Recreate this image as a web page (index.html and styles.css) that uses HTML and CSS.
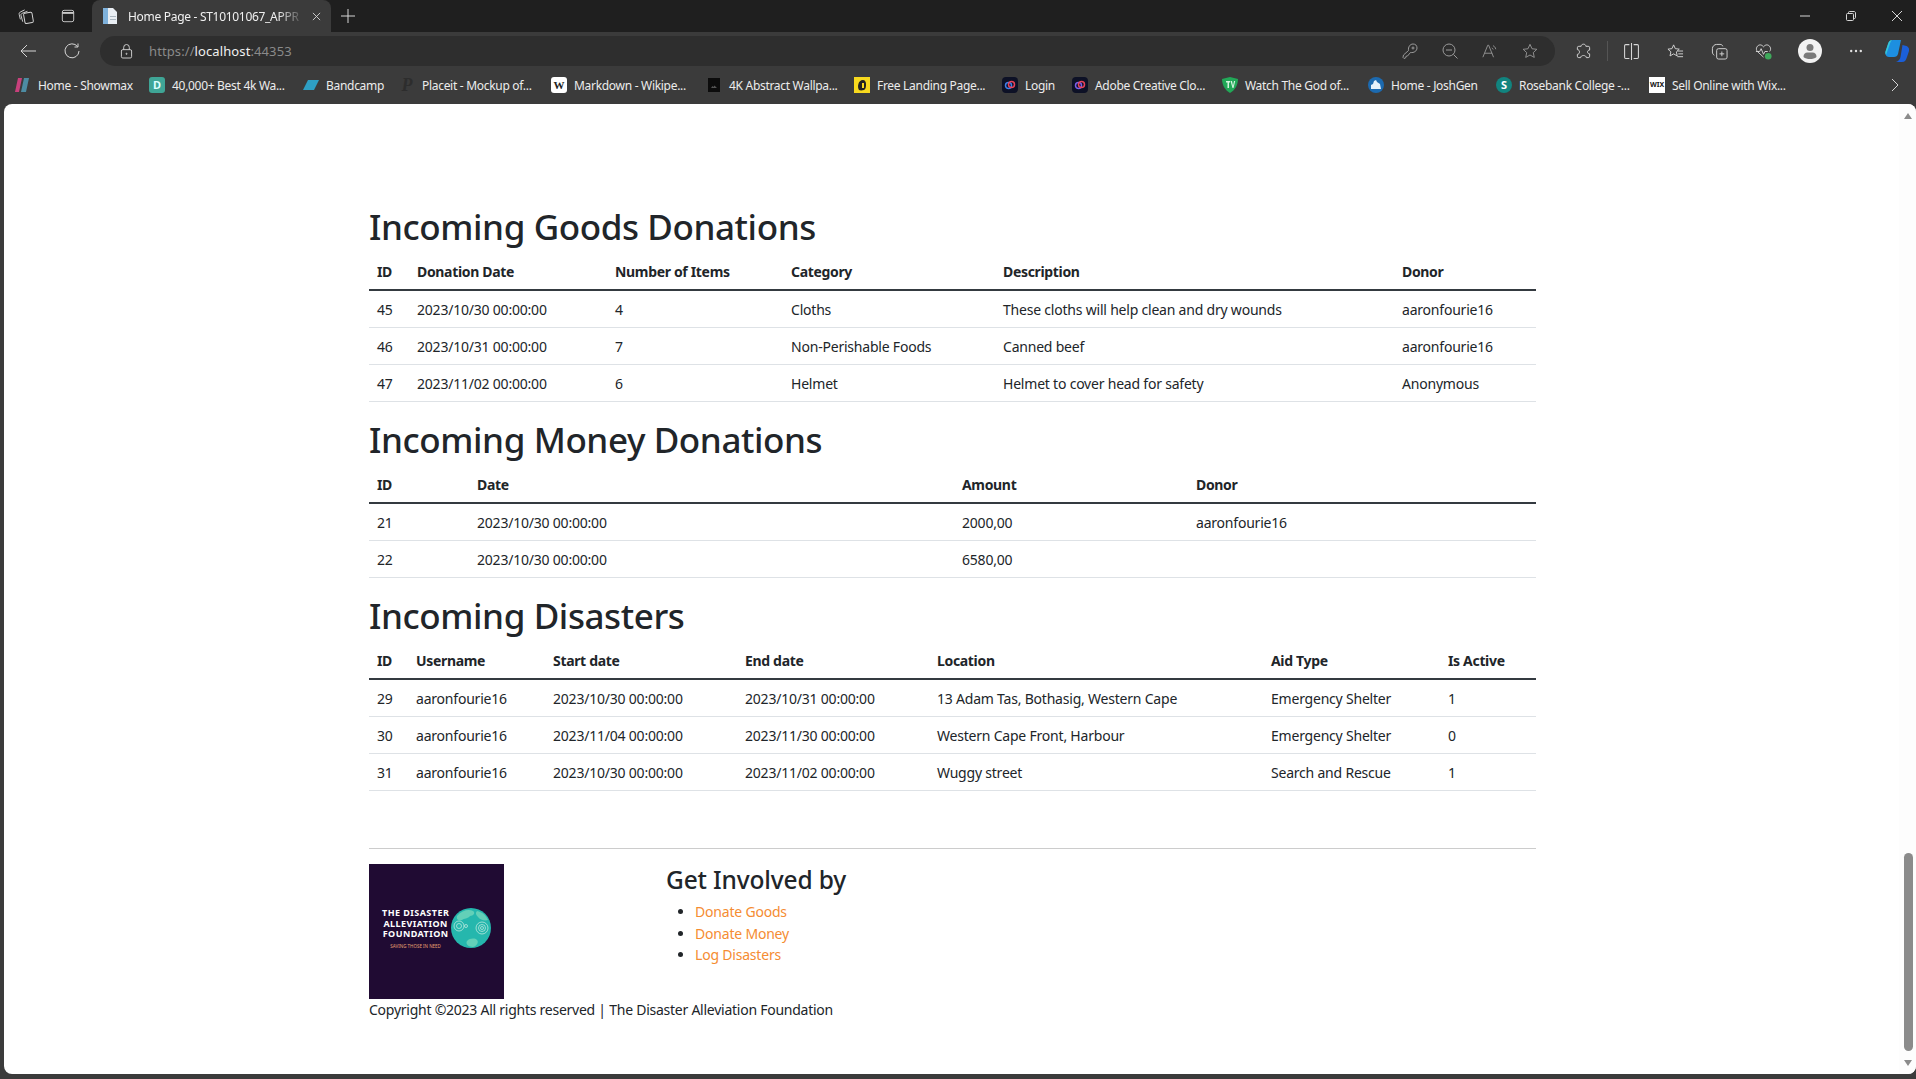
FILE: index.html
```
<!DOCTYPE html>
<html lang="en">
<head>
  <meta charset="UTF-8">
  <title>Home Page - ST10101067_APPR</title>
  <link rel="stylesheet" href="styles.css">
</head>
<body>

<div class="tabstrip">
  <svg class="ico tab-btn-a" viewBox="0 0 18 18"><rect x="6.500" y="5" width="9" height="11" rx="1.500" transform="rotate(-10 11 10)"/><path d="M5 14.500 3.200 8c-.3-1.200.2-2 1.300-2.400L10 3.500M2.500 12 1.300 7c-.4-1.400.2-2.300 1.300-2.800L7 2"/></svg>
  <svg class="ico tab-btn-b" viewBox="0 0 16 16"><rect x="1.500" y="1.500" width="13" height="13" rx="2"/><path d="M1.500 4.500h13" stroke-width="2"/></svg>
  <div class="tab">
    <svg class="tab-fav" viewBox="0 0 16 16"><path fill="#e9eef3" d="M1 0h10l4 4v12H1z"/><path fill="#7fb2dc" d="M1 0h5v16H1z"/><path fill="#aab6c0" d="M8 8h6v1H8zM8 11h6v1H8z"/></svg>
    <span class="tab-title">Home Page - ST10101067_APPR</span>
    <svg class="ico tab-close" viewBox="0 0 10 10"><path d="M1 1l8 8M9 1l-8 8"/></svg>
  </div>
  <svg class="ico tab-new" viewBox="0 0 14 14"><path d="M7 0v14M0 7h14"/></svg>
  <div class="win-btns">
    <svg class="ico" viewBox="0 0 10 10"><path d="M0 5h10"/></svg>
    <svg class="ico" viewBox="0 0 10 10"><rect x=".5" y="2.500" width="7" height="7" rx="1"/><path d="M2.500 2.500V1.500c0-.6.400-1 1-1h4.500c.9 0 1.500.6 1.500 1.500v4.500c0 .6-.4 1-1 1h-1"/></svg>
    <svg class="ico" viewBox="0 0 10 10"><path d="M0 0l10 10M10 0 0 10"/></svg>
  </div>
</div>

<div class="toolbar">
  <svg class="ico tb-back" viewBox="0 0 16 14"><path d="M16 7H1M7 1 1 7l6 6"/></svg>
  <svg class="ico tb-reload" viewBox="0 0 16 16"><path d="M13.500 3.500A7 7 0 1 0 15 8M14 .5v3.500h-3.500"/></svg>
  <div class="address">
    <svg class="ico lock" viewBox="0 0 14 16"><rect x="1.500" y="6" width="11" height="9" rx="1.500"/><path d="M4 6V3.500a3 3 0 0 1 6 0V6"/><circle cx="7" cy="10.500" r=".6"/></svg>
    <span class="url"><span class="dim">https://</span>localhost<span class="dim">:44353</span></span>
    <div class="addr-icons">
      <svg class="ico" viewBox="0 0 16 16"><path d="M2 15.500 1 14.500 1.500 12 6.500 7.500C6 4 8 1 11 1c2.500 0 4 1.500 4 4 0 3-3 5-6.500 4.500L5.500 13l-1.500.3-.3 1.500z"/><circle cx="11" cy="5" r="1"/></svg>
      <svg class="ico" viewBox="0 0 16 16"><circle cx="7" cy="7" r="6"/><path d="M4 7h6M11.500 11.500l4 4"/></svg>
      <svg class="ico" viewBox="0 0 18 16"><path d="M1 15 6.500 1.500h1L13 15M3 10.500h8.500M12.500 2c1.500.8 2.500 2 3 4M11 4.500c.8.4 1.300 1 1.600 1.800"/></svg>
      <svg class="ico" viewBox="0 0 18 18"><path d="M9 1.500l2.300 5 5.400.6-4 3.700 1.100 5.400L9 13.500l-4.800 2.700 1.100-5.400-4-3.700 5.400-.6z"/></svg>
    </div>
  </div>
  <div class="tb-right">
    <svg class="ico tb-i" viewBox="0 0 16 18"><path d="M5.500 3.500c0-3 5-3 5 0h2.500c1 0 1.500.5 1.500 1.500v2.500c-3 0-3 4 0 4v2.500c0 1-.5 1.500-1.500 1.500h-2c0-3-6-3-6 0h-2c-1 0-1.500-.5-1.500-1.500v-2c3 0 3-5 0-5V5c0-1 .5-1.500 1.500-1.500z"/></svg>
    <span class="tb-div"></span>
    <svg class="ico tb-i" viewBox="0 0 16 16"><path d="M6 1.500H2.500c-.6 0-1 .4-1 1v11c0 .6.4 1 1 1H6M10 1.500h3.500c.6 0 1 .4 1 1v11c0 .6-.4 1-1 1H10M8 0v16"/></svg>
    <svg class="ico tb-i" viewBox="0 0 18 18"><path d="M7 2l1.800 4 4.200.5-3.100 2.900.9 4.300L7 11.500l-3.800 2.200.9-4.300L1 6.500 5.200 6zM11 8.500h6M12 11.500h5M11 14.500h6"/></svg>
    <svg class="ico tb-i" viewBox="0 0 18 18"><rect x="6" y="6" width="11" height="11" rx="2"/><path d="M11.500 9v5M9 11.500h5M3.500 13C2 12 1.500 11 1.500 9.500V6c0-2.500 2-4.500 4.500-4.500h3.500c1.500 0 2.500.5 3 2"/></svg>
    <svg class="ico tb-i" viewBox="0 0 18 18"><path d="M9 15 2.500 9C0 6 2.500 2 5.500 2 7 2 8 3 9 4c1-1 2-2 3.500-2 3 0 5.500 4 3 7M1 9h4l1.500-3 2.500 6 1.500-3h3"/><circle cx="14" cy="14" r="3.500" fill="#3fa85b" stroke="none"/></svg>
    <div class="avatar"><svg viewBox="0 0 24 24"><circle cx="12" cy="8.500" r="3.500" fill="#7a7a7a"/><path fill="#7a7a7a" d="M5.500 18c0-3 1.500-4.500 4-4.500h5c2.500 0 4 1.500 4 4.500-1.500 1.500-4 2-6.500 2s-5-.5-6.500-2z"/></svg></div>
    <svg class="more" viewBox="0 0 12 4"><circle cx="1.200" cy="2" r="1.200"/><circle cx="6" cy="2" r="1.200"/><circle cx="10.800" cy="2" r="1.200"/></svg>
    <svg class="copilot" viewBox="0 0 24 24"><path fill="#1d8fe0" d="M8 1h8l-3 14c-.5 2-2 3-4 3H4C1 18 0 15 .7 12L3 5c.8-2.500 2.500-4 5-4z"/><path fill="#36c6d6" d="M1 16c-1-1.500-1-3 0-5l2-6c.8-2.500 2-4 4-4-1 1-2 3-2.500 5z"/><path fill="#1b5fd8" d="M11 23h6c3 0 4-2 5-5l2-6c.5-2.500-.5-4-2.500-5l-4-1-2 12c-.5 2.500-2 4-4.500 5z"/></svg>
  </div>
</div>

<nav class="bookmarks">
  <a class="bm"><svg class="fav" viewBox="0 0 16 16"><path fill="#c8407c" d="M3 1h4L4 15H0z"/><path fill="#4d8ca3" d="M9 1h5l-3 14H6z"/></svg><span>Home - Showmax</span></a>
  <a class="bm"><span class="fav fav-d">D</span><span>40,000+ Best 4k Wa...</span></a>
  <a class="bm"><svg class="fav" viewBox="0 0 16 16"><path fill="#2e9fc4" d="M5 3h11l-5 10H0z"/></svg><span>Bandcamp</span></a>
  <a class="bm"><span class="fav fav-p">P</span><span>Placeit - Mockup of...</span></a>
  <a class="bm"><span class="fav fav-w">W</span><span>Markdown - Wikipe...</span></a>
  <a class="bm"><svg class="fav" viewBox="0 0 16 16"><rect x="2" y="1" width="12" height="14" fill="#0c0c0c"/><path fill="#555" d="M5 11l1.500-2 1 1 1-1.500L11 11z"/></svg><span>4K Abstract Wallpa...</span></a>
  <a class="bm"><svg class="fav" viewBox="0 0 16 16"><rect width="16" height="16" fill="#f7d91e"/><path fill="#222" d="M5 13C3 10 4 3 9 3c2 0 3 2 3 4s0 5-2 6c-2 .6-4 .6-5 0z"/><path fill="#f7d91e" d="M8 6h2v5H8z"/></svg><span>Free Landing Page...</span></a>
  <a class="bm"><svg class="fav" viewBox="0 0 16 16"><rect width="16" height="16" rx="4" fill="#0d1126"/><circle cx="6.500" cy="8.500" r="3" fill="none" stroke="#3f7fe8" stroke-width="1.500"/><circle cx="9.500" cy="7.500" r="3" fill="none" stroke="#e8435a" stroke-width="1.500"/></svg><span>Login</span></a>
  <a class="bm"><svg class="fav" viewBox="0 0 16 16"><rect width="16" height="16" rx="4" fill="#0d1126"/><circle cx="6.500" cy="8.500" r="3" fill="none" stroke="#7a5fe8" stroke-width="1.500"/><circle cx="9.500" cy="7.500" r="3" fill="none" stroke="#e8435a" stroke-width="1.500"/></svg><span>Adobe Creative Clo...</span></a>
  <a class="bm"><svg class="fav" viewBox="0 0 16 16"><path fill="#22a858" d="M0 2l8-2 8 2c0 6-3 11-8 14C3 13 0 8 0 2z"/><path fill="#d5f5df" d="M4 4h4v1.500H7V11H5.500V5.500H4zM8.500 4H10l1 5 1-5h1.200L11.500 11h-1z"/></svg><span>Watch The God of...</span></a>
  <a class="bm"><svg class="fav" viewBox="0 0 16 16"><circle cx="8" cy="8" r="8" fill="#1c6ab0"/><path fill="#e5f1fb" d="M3 12V8l2-1 1-3 2-1 1 2 3 2 1 5z"/></svg><span>Home - JoshGen</span></a>
  <a class="bm"><span class="fav fav-s">S</span><span>Rosebank College -...</span></a>
  <a class="bm"><span class="fav fav-wix">WIX</span><span>Sell Online with Wix...</span></a>
  <svg class="ico bm-next" viewBox="0 0 8 14"><path d="M1 1l6 6-6 6"/></svg>
</nav>

<div class="viewport">
  <main class="page">
    <h1>Incoming Goods Donations</h1>
    <table class="goods">
      <colgroup><col><col><col><col><col><col></colgroup>
      <thead>
        <tr><th>ID</th><th>Donation Date</th><th>Number of Items</th><th>Category</th><th>Description</th><th>Donor</th></tr>
      </thead>
      <tbody>
        <tr><td>45</td><td>2023/10/30 00:00:00</td><td>4</td><td>Cloths</td><td>These cloths will help clean and dry wounds</td><td>aaronfourie16</td></tr>
        <tr><td>46</td><td>2023/10/31 00:00:00</td><td>7</td><td>Non-Perishable Foods</td><td>Canned beef</td><td>aaronfourie16</td></tr>
        <tr><td>47</td><td>2023/11/02 00:00:00</td><td>6</td><td>Helmet</td><td>Helmet to cover head for safety</td><td>Anonymous</td></tr>
      </tbody>
    </table>

    <h1>Incoming Money Donations</h1>
    <table class="money">
      <colgroup><col><col><col><col></colgroup>
      <thead>
        <tr><th>ID</th><th>Date</th><th>Amount</th><th>Donor</th></tr>
      </thead>
      <tbody>
        <tr><td>21</td><td>2023/10/30 00:00:00</td><td>2000,00</td><td>aaronfourie16</td></tr>
        <tr><td>22</td><td>2023/10/30 00:00:00</td><td>6580,00</td><td></td></tr>
      </tbody>
    </table>

    <h1>Incoming Disasters</h1>
    <table class="disasters">
      <colgroup><col><col><col><col><col><col><col></colgroup>
      <thead>
        <tr><th>ID</th><th>Username</th><th>Start date</th><th>End date</th><th>Location</th><th>Aid Type</th><th>Is Active</th></tr>
      </thead>
      <tbody>
        <tr><td>29</td><td>aaronfourie16</td><td>2023/10/30 00:00:00</td><td>2023/10/31 00:00:00</td><td>13 Adam Tas, Bothasig, Western Cape</td><td>Emergency Shelter</td><td>1</td></tr>
        <tr><td>30</td><td>aaronfourie16</td><td>2023/11/04 00:00:00</td><td>2023/11/30 00:00:00</td><td>Western Cape Front, Harbour</td><td>Emergency Shelter</td><td>0</td></tr>
        <tr><td>31</td><td>aaronfourie16</td><td>2023/10/30 00:00:00</td><td>2023/11/02 00:00:00</td><td>Wuggy street</td><td>Search and Rescue</td><td>1</td></tr>
      </tbody>
    </table>

    <footer class="site-footer">
      <hr>
      <div class="footer-row">
        <div class="logo">
          <div class="logo-text">
            <div>THE DISASTER</div>
            <div>ALLEVIATION</div>
            <div>FOUNDATION</div>
            <div class="logo-tag">SAVING THOSE IN NEED</div>
          </div>
          <svg class="globe" viewBox="0 0 40 40">
            <circle cx="20" cy="20" r="20" fill="#25b7ad"/>
            <path fill="#63d0b8" d="M6 8c5-6 12-7 16-5 3 2 0 5-3 5-2 3-6 2-8 4-3 1-6 0-5-4zM26 3c5 1 9 4 11 9-3 1-8 0-10-3-2-2-3-4-1-6zM16 33c3-3 8-3 10-1 2 2 0 6-4 7-4 0-8-3-6-6z"/>
            <g fill="none" stroke="#cdeee4" stroke-width=".7">
              <circle cx="8" cy="18" r="2.500"/><circle cx="8" cy="18" r="5"/>
              <circle cx="31" cy="20" r="1.500"/><circle cx="31" cy="20" r="3.500"/><circle cx="31" cy="20" r="6"/>
              <circle cx="15" cy="18" r="1.500"/>
            </g>
          </svg>
        </div>
        <div class="involved">
          <h3>Get Involved by</h3>
          <ul>
            <li><a href="#goods">Donate Goods</a></li>
            <li><a href="#money">Donate Money</a></li>
            <li><a href="#disasters">Log Disasters</a></li>
          </ul>
        </div>
      </div>
      <p class="copyright">Copyright ©2023 All rights reserved | The Disaster Alleviation Foundation</p>
    </footer>
  </main>
  <div class="scrollbar">
    <span class="arrow-up"></span>
    <span class="thumb"></span>
    <span class="arrow-down"></span>
  </div>
</div>

</body>
</html>
```

FILE: styles.css
```
html, body {
  margin: 0;
  padding: 0;
  height: 100%;
  overflow: hidden;
}

body {
  display: flex;
  flex-direction: column;
  background: #3b3b3b;
  font-family: "Noto Sans", "Open Sans", sans-serif;
  font-size: 14px;
  line-height: 21px;
  color: #212529;
}

.ico {
  fill: none;
  stroke: #d6d6d6;
  stroke-width: 1;
  flex: none;
}

/* tab strip */
.tabstrip {
  height: 32px;
  flex: none;
  display: flex;
  align-items: center;
  background: #1f1f1f;
}

.tab-btn-a { width: 17px; height: 17px; margin-left: 18px; }
.tab-btn-b { width: 14px; height: 14px; margin-left: 26px; }

.tab {
  width: 239px;
  height: 32px;
  margin-left: 17px;
  background: #3b3b3b;
  border-radius: 8px 8px 0 0;
  display: flex;
  align-items: center;
  box-sizing: border-box;
  padding-left: 10px;
}

.tab-fav { width: 16px; height: 16px; flex: none; }

.tab-title {
  width: 176px;
  margin-left: 10px;
  font-size: 12px;
  letter-spacing: -0.3px;
  color: #f0f0f0;
  white-space: nowrap;
  overflow: hidden;
  -webkit-mask-image: linear-gradient(to right, #000 85%, transparent);
  mask-image: linear-gradient(to right, #000 85%, transparent);
}

.tab-close { width: 9px; height: 9px; margin-left: 8px; }
.tab-new { width: 14px; height: 14px; margin-left: 10px; }

.win-btns {
  margin-left: auto;
  display: flex;
  gap: 36px;
  margin-right: 14px;
}

.win-btns svg { width: 10px; height: 10px; }

/* address bar row */
.toolbar {
  height: 30px;
  flex: none;
  padding-top: 4px;
  display: flex;
  align-items: center;
  background: #3b3b3b;
}

.tb-back { width: 16px; height: 14px; margin-left: 20px; }
.tb-reload { width: 16px; height: 16px; margin-left: 28px; }

.address {
  width: 1455px;
  height: 30px;
  margin-left: 20px;
  background: #2e2e2e;
  border-radius: 15px;
  display: flex;
  align-items: center;
  box-sizing: border-box;
  padding-left: 20px;
}

.lock { width: 13px; height: 15px; }

.url {
  margin-left: 16px;
  font-size: 13px;
  letter-spacing: 0.1px;
  color: #f0f0f0;
}

.url .dim { color: #8a8a8a; }

.addr-icons {
  margin-left: auto;
  margin-right: 17px;
  display: flex;
  align-items: center;
  gap: 24px;
}

.addr-icons svg { width: 16px; height: 16px; stroke: #9a9a9a; }

.tb-right {
  display: flex;
  align-items: center;
  margin-left: 20px;
  flex: 1;
}

.tb-i { width: 17px; height: 17px; margin-right: 27px; }
.tb-right .tb-i:first-child { margin-right: 15px; }
.tb-div { width: 1px; height: 20px; background: #555; margin-right: 15px; }

.avatar {
  width: 24px;
  height: 24px;
  margin-left: -1px;
  border-radius: 50%;
  background: #f2f2f2;
  overflow: hidden;
}

.avatar svg { display: block; width: 24px; height: 24px; }

.more {
  width: 12px;
  height: 4px;
  margin-left: 28px;
  fill: #e0e0e0;
  flex: none;
}

.copilot { width: 24px; height: 24px; margin-left: 23px; flex: none; }

/* bookmarks */
.bookmarks {
  height: 38px;
  flex: none;
  display: grid;
  grid-template-columns: 134px 154px 96px 152px 155px 148px 148px 70px 150px 146px 128px 153px 242px 16px;
  align-items: center;
  padding-left: 15px;
  background: #3b3b3b;
  box-sizing: border-box;
  font-size: 12px;
  letter-spacing: -0.3px;
  color: #ececec;
}

.bm {
  display: flex;
  align-items: center;
  gap: 7px;
  white-space: nowrap;
  overflow: hidden;
}

.fav {
  width: 16px;
  height: 16px;
  flex: none;
  display: block;
  text-align: center;
  letter-spacing: 0;
  font-size: 11px;
  line-height: 16px;
  font-weight: 700;
}

.fav-d { background: #3fa596; color: #dff; border-radius: 3px; }
.fav-p { color: #2d2d2d; font-size: 18px; font-style: italic; font-family: "Liberation Serif", serif; }
.fav-w { background: #fff; color: #222; border-radius: 3px; font-family: "Liberation Serif", serif; }
.fav-s { background: #11847f; color: #fff; border-radius: 50%; }
.fav-wix { background: #fff; color: #111; font-size: 7px; }

.bm-next { width: 8px; height: 14px; }

/* page */
.viewport {
  flex: 1;
  min-height: 0;
  margin: 0 0 5px 4px;
  background: #fff;
  border-radius: 8px;
  display: flex;
  overflow: hidden;
}

.page {
  flex: 1;
  box-sizing: border-box;
  padding: 100px 0 0 365px;
}

.page > *, .site-footer { width: 1167px; }

h1 {
  margin: 0 0 5px;
  padding-top: 2px;
  font-size: 35px;
  line-height: 42px;
  font-weight: 500;
  letter-spacing: -0.4px;
}

table {
  border-collapse: collapse;
  table-layout: fixed;
  margin-bottom: 15px;
}

th, td {
  padding: 7.5px 8px;
  text-align: left;
  border-bottom: 1px solid #dee2e6;
  white-space: nowrap;
  letter-spacing: -0.21px;
}

th {
  font-weight: 700;
  letter-spacing: -0.33px;
  border-bottom: 2px solid #343a40;
}

.goods col:nth-child(1) { width: 40px; }
.goods col:nth-child(2) { width: 198px; }
.goods col:nth-child(3) { width: 176px; }
.goods col:nth-child(4) { width: 212px; }
.goods col:nth-child(5) { width: 399px; }
.goods col:nth-child(6) { width: 142px; }

.money col:nth-child(1) { width: 100px; }
.money col:nth-child(2) { width: 485px; }
.money col:nth-child(3) { width: 234px; }
.money col:nth-child(4) { width: 348px; }

.disasters col:nth-child(1) { width: 39px; }
.disasters col:nth-child(2) { width: 137px; }
.disasters col:nth-child(3) { width: 192px; }
.disasters col:nth-child(4) { width: 192px; }
.disasters col:nth-child(5) { width: 334px; }
.disasters col:nth-child(6) { width: 177px; }
.disasters col:nth-child(7) { width: 96px; }

/* footer */
.site-footer { padding-top: 42px; }

hr {
  margin: 0 0 15px;
  border: 0;
  border-top: 1px solid #ccc;
}

.footer-row {
  display: grid;
  grid-template-columns: 297px 1fr;
}

.logo {
  width: 135px;
  height: 135px;
  box-sizing: border-box;
  padding: 0 13px 0 13px;
  background: #200b33;
  color: #fff;
  display: flex;
  align-items: center;
  justify-content: space-between;
}

.logo-text {
  font-size: 9px;
  line-height: 10.500px;
  font-weight: 700;
  letter-spacing: 0.45px;
  text-align: center;
  white-space: nowrap;
  margin-top: -6px;
}

.logo-tag {
  margin-top: 3px;
  font-size: 4.500px;
  line-height: 6px;
  font-weight: 400;
  letter-spacing: 0;
  color: #e8a070;
}

.globe { width: 40px; height: 40px; flex: none; margin-top: -7px; }

.involved { padding-top: 1px; }

h3 {
  margin: 0 0 7px;
  font-size: 24.500px;
  line-height: 29.400px;
  font-weight: 500;
  letter-spacing: -0.15px;
}

ul {
  margin: 0;
  padding-left: 29px;
  line-height: 21.500px;
  letter-spacing: -0.2px;
}

ul a { color: #f58c32; text-decoration: none; }

.copyright {
  margin: 0;
  letter-spacing: -0.25px;
}

/* scrollbar */
.scrollbar {
  width: 17px;
  flex: none;
  position: relative;
  background: #fdfdfd;
}

.thumb {
  position: absolute;
  left: 5px;
  width: 9px;
  top: 749px;
  height: 198px;
  border-radius: 5px;
  background: #8b8b8b;
}

.arrow-up, .arrow-down {
  position: absolute;
  left: 5px;
  width: 0;
  height: 0;
  border-left: 4.500px solid transparent;
  border-right: 4.500px solid transparent;
}

.arrow-up { top: 9px; border-bottom: 6px solid #8b8b8b; }
.arrow-down { bottom: 8px; border-top: 6px solid #8b8b8b; }
```
